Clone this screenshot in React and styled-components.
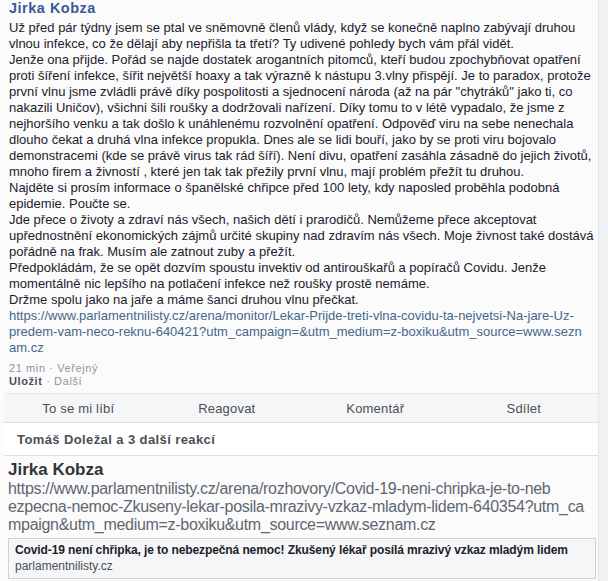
import React from "react";
import styled, { createGlobalStyle } from "styled-components";

const GlobalStyle = createGlobalStyle`
	body {
		margin: 0;
		background: #f1f2f4;
		font-family: "Liberation Sans", Arial, sans-serif;
	}
`;

const bodyLines = [
	"Už před pár týdny jsem se ptal ve sněmovně členů vlády, když se konečně naplno zabývají druhou",
	"vlnou infekce, co že dělají aby nepřišla ta třetí? Ty udivené pohledy bych vám přál vidět.",
	"Jenže ona přijde. Pořád se najde dostatek arogantních pitomců, kteří budou zpochybňovat opatření",
	"proti šíření infekce, šířit největší hoaxy a tak výrazně k nástupu 3.vlny přispějí. Je to paradox, protože",
	"první vlnu jsme zvládli právě díky pospolitosti a sjednocení národa (až na pár \"chytráků\" jako ti, co",
	"nakazili Uničov), všichni šili roušky a dodržovali nařízení. Díky tomu to v létě vypadalo, že jsme z",
	"nejhoršího venku a tak došlo k unáhlenému rozvolnění opatření. Odpověď viru na sebe nenechala",
	"dlouho čekat a druhá vlna infekce propukla. Dnes ale se lidi bouří, jako by se proti viru bojovalo",
	"demonstracemi (kde se právě virus tak rád šíří). Není divu, opatření zasáhla zásadně do jejich životů,",
	"mnoho firem a živností , které jen tak tak přežily první vlnu, mají problém přežít tu druhou.",
	"Najděte si prosím informace o španělské chřipce před 100 lety, kdy naposled proběhla podobná",
	"epidemie. Poučte se.",
	"Jde přece o životy a zdraví nás všech, našich dětí i prarodičů. Nemůžeme přece akceptovat",
	"upřednostnění ekonomických zájmů určité skupiny nad zdravím nás všech. Moje živnost také dostává",
	"pořádně na frak. Musím ale zatnout zuby a přežít.",
	"Předpokládám, že se opět dozvím spoustu invektiv od antirouškařů a popíračů Covidu. Jenže",
	"momentálně nic lepšího na potlačení infekce než roušky prostě nemáme.",
	"Držme spolu jako na jaře a máme šanci druhou vlnu přečkat.",
];

const linkLines = [
	"https://www.parlamentnilisty.cz/arena/monitor/Lekar-Prijde-treti-vlna-covidu-ta-nejvetsi-Na-jare-Uz-",
	"predem-vam-neco-reknu-640421?utm_campaign=&utm_medium=z-boxiku&utm_source=www.sezn",
	"am.cz",
];

const sharedLines = [
	"https://www.parlamentnilisty.cz/arena/rozhovory/Covid-19-neni-chripka-je-to-neb",
	"ezpecna-nemoc-Zkuseny-lekar-posila-mrazivy-vzkaz-mladym-lidem-640354?utm_ca",
	"mpaign&utm_medium=z-boxiku&utm_source=www.seznam.cz",
];

const actions = ["To se mi líbí", "Reagovat", "Komentář", "Sdílet"];

const App = () => {
	return (
		<>
			<GlobalStyle />
			<Page>
				<Column>
					<Post>
						<Author>Jirka Kobza</Author>
						<Body>
							{bodyLines.map((line, i) => (
								<Line key={i}>{line}</Line>
							))}
							{linkLines.map((line, i) => (
								<Line key={"l" + i} $link>{line}</Line>
							))}
						</Body>
						<MetaBlock>
							<Meta>21 min · Veřejný</Meta>
							<Meta>
								<Strong>Uložit</Strong> · Další
							</Meta>
						</MetaBlock>
					</Post>

					<ActionBar>
						{actions.map((a) => (
							<Action key={a}>{a}</Action>
						))}
					</ActionBar>

					<Reactions>Tomáš Doležal a 3 další reakcí</Reactions>

					<Shared>
						<SharedAuthor>Jirka Kobza</SharedAuthor>
						{sharedLines.map((line, i) => (
							<SharedLine key={i}>{line}</SharedLine>
						))}
						<Preview>
							<PreviewTitle>
								Covid-19 není chřipka, je to nebezpečná nemoc! Zkušený lékař posílá mrazivý vzkaz mladým lidem
							</PreviewTitle>
							<PreviewDomain>parlamentnilisty.cz</PreviewDomain>
						</Preview>
					</Shared>
				</Column>
			</Page>
		</>
	);
};

export default App;

const Page = styled.div`
	display: flex;
	width: 608px;
	height: 581px;
	overflow: hidden;
`;

const Column = styled.div`
	width: 598px;
	flex-shrink: 0;
	background: #fbfbfc;
	border-right: 1px solid #e4e5e8;
`;

const Post = styled.div`
	padding: 0 10px 3px 9px;
`;

const Author = styled.div`
	font-size: 14.5px;
	line-height: 16px;
	font-weight: bold;
	color: #3b5998;
	letter-spacing: 0.5px;
`;

const Body = styled.div`
	margin-top: 4px;
`;

const Line = styled.div`
	font-size: 13px;
	line-height: 16px;
	white-space: nowrap;
	color: ${(p) => (p.$link ? "#45678a" : "#1d2129")};
`;

const MetaBlock = styled.div`
	margin-top: 6px;
`;

const Meta = styled.div`
	font-size: 11px;
	line-height: 13px;
	color: #90949c;
	letter-spacing: 0.6px;
`;

const Strong = styled.span`
	font-weight: bold;
	color: #4b4f56;
`;

const ActionBar = styled.div`
	display: grid;
	grid-template-columns: repeat(4, 1fr);
	margin: 2px 0 0 4px;
	height: 28px;
	background: #f5f6f7;
	border-top: 1px solid #e6e7ea;
	border-bottom: 1px solid #dddfe2;
`;

const Action = styled.div`
	display: flex;
	align-items: center;
	justify-content: center;
	font-size: 13px;
	color: #4b4f56;
	letter-spacing: 0.2px;
`;

const Reactions = styled.div`
	margin-left: 4px;
	height: 32px;
	padding-left: 13px;
	display: flex;
	align-items: center;
	background: #ffffff;
	border-bottom: 1px solid #dddfe2;
	font-size: 13px;
	font-weight: bold;
	color: #4b4f56;
	letter-spacing: 0.4px;
`;

const Shared = styled.div`
	padding: 4px 2px 0 8px;
`;

const SharedAuthor = styled.div`
	font-size: 17px;
	line-height: 20px;
	font-weight: bold;
	color: #333333;
`;

const SharedLine = styled.div`
	font-size: 16px;
	line-height: 18px;
	color: #606770;
	letter-spacing: -0.3px;
	white-space: nowrap;
`;

const Preview = styled.div`
	margin-top: 4px;
	padding: 3px 6px 4px;
	background: #f5f6f7;
	border: 1px solid #cfd1d5;
`;

const PreviewTitle = styled.div`
	font-size: 12px;
	line-height: 16px;
	font-weight: bold;
	color: #1d2129;
	letter-spacing: -0.1px;
	white-space: nowrap;
`;

const PreviewDomain = styled.div`
	font-size: 12px;
	line-height: 16px;
	color: #4b4f56;
`;
